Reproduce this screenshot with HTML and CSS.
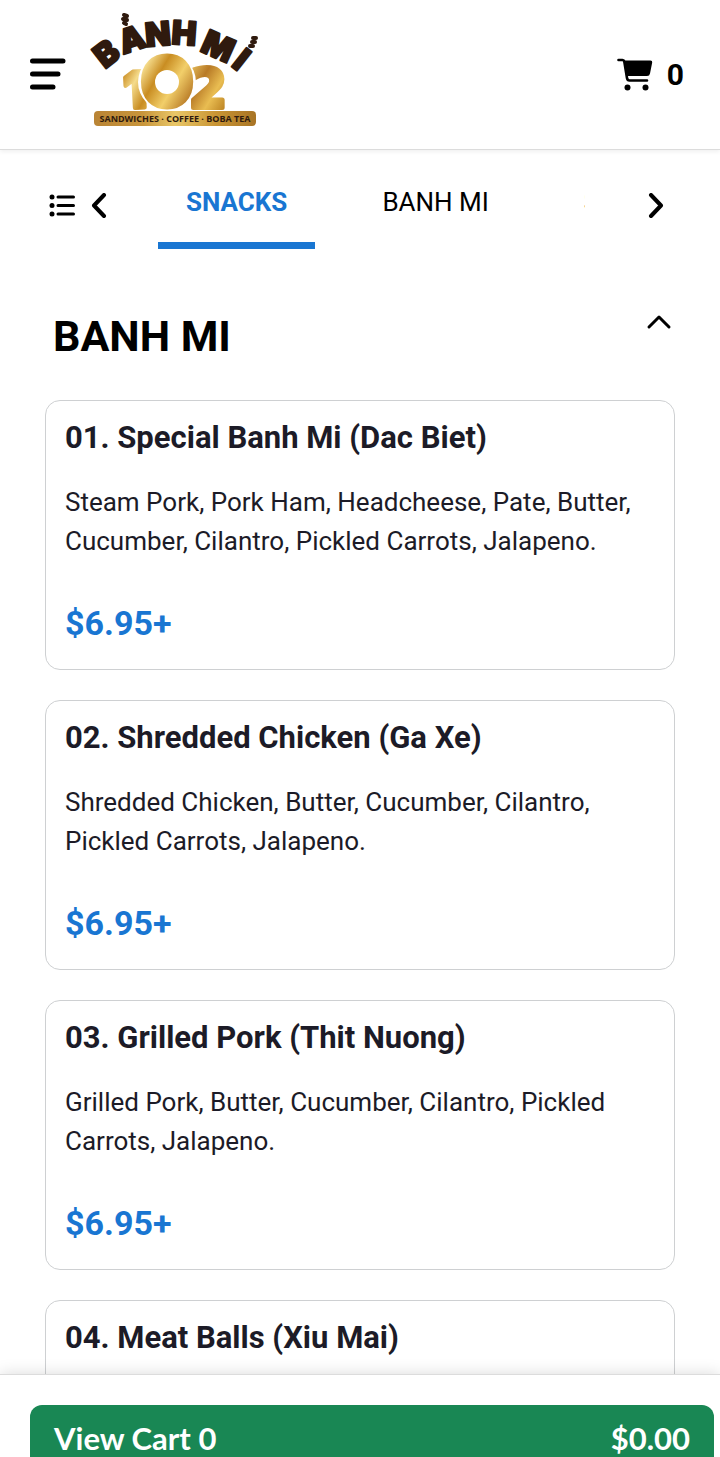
FILE: index.html
```html
<!DOCTYPE html>
<html lang="en">
<head>
  <meta charset="UTF-8" />
  <meta name="viewport" content="width=device-width, initial-scale=1.0" />
  <title>Banh Mi 102</title>
  <link rel="stylesheet" href="styles.css">
</head>
<body>
  <header class="header">
    <button class="icon-btn" type="button" aria-label="Menu">
      <svg width="36" height="32" viewBox="0 0 36 32" stroke="#000" stroke-width="5" stroke-linecap="round">
        <path d="M2.500 3H33M2.500 16H28M2.500 29H23" />
      </svg>
    </button>
    <a class="logo" href="#" aria-label="Banh Mi 102">
      <svg width="170" height="116" viewBox="0 0 170 116">
        <defs>
          <linearGradient id="gold" gradientUnits="userSpaceOnUse" x1="30" y1="48" x2="130" y2="108">
            <stop offset="0" stop-color="#b5781f" />
            <stop offset=".12" stop-color="#d19a35" />
            <stop offset=".22" stop-color="#f5dc8c" />
            <stop offset=".36" stop-color="#c98d22" />
            <stop offset=".52" stop-color="#f2cf6a" />
            <stop offset=".7" stop-color="#b87a26" />
            <stop offset=".85" stop-color="#e9bd52" />
            <stop offset="1" stop-color="#bd8423" />
          </linearGradient>
          <linearGradient id="band">
            <stop offset="0" stop-color="#b98435" />
            <stop offset=".3" stop-color="#c8953b" />
            <stop offset=".5" stop-color="#e9c768" />
            <stop offset=".75" stop-color="#c99534" />
            <stop offset="1" stop-color="#a87425" />
          </linearGradient>
        </defs>
        <g class="logo-name">
          <text transform="translate(18 43) rotate(-38)" y="11">B</text>
          <text transform="translate(43 29) rotate(-18)" y="11">A</text>
          <text transform="translate(69 24) rotate(-5)" y="11">N</text>
          <text transform="translate(95 23) rotate(4)" y="11">H</text>
          <text transform="translate(129 36) rotate(24)" y="11">M</text>
          <text transform="translate(152 49) rotate(38)" y="11">I</text>
        </g>
        <!-- little loaves used as accents -->
        <g stroke="#2f1a0e" stroke-width="4" stroke-linecap="round">
          <path d="M35 4l3 1M34 8l4 1M35 12l2 1" />
          <path d="M164 27h3M163 31h3M161 35h3" />
        </g>
        <g class="logo-number">
          <text x="46" y="97" transform="rotate(-3 43 80)">1</text>
          <text class="logo-two" x="119" y="96">2</text>
          <circle cx="78" cy="71" r="29" fill="#fff" />
          <text class="logo-ring" x="78" y="94">O</text>
          <circle cx="78" cy="71" r="12" fill="#fff" />
        </g>
        <rect x="5" y="100" width="162" height="15" rx="4" fill="url(#band)" />
        <text class="logo-tag" x="86" y="111">SANDWICHES · COFFEE · BOBA TEA</text>
      </svg>
    </a>
    <a class="cart" href="#" aria-label="Cart, 0 items">
      <svg width="36" height="33" viewBox="0 0 36 33">
        <path d="M1.500 2H5.500Q7 2 7.300 3.500L10 20Q10.400 22.500 12.500 22.500H30" fill="none" stroke="#000" stroke-width="2.600" stroke-linecap="round" />
        <path d="M6.500 2.500H33.500Q35.500 2.500 35.200 4.500L33 15.500Q32.600 18 30 18H9.300Z" />
        <circle cx="10.500" cy="29.500" r="3" />
        <circle cx="28.500" cy="29.500" r="3" />
      </svg>
      <span>0</span>
    </a>
  </header>

  <nav class="tabs">
    <button class="icon-btn" type="button" aria-label="All categories">
      <svg width="26" height="24" viewBox="0 0 26 24">
        <path d="M9 3H24.500M9 11.500H24.500M9 20H24.500" stroke="#000" stroke-width="3" stroke-linecap="round" />
        <circle cx="3" cy="3" r="2.500" />
        <circle cx="3" cy="11.500" r="2.500" />
        <circle cx="3" cy="20" r="2.500" />
      </svg>
    </button>
    <button class="icon-btn" type="button" aria-label="Previous">
      <svg class="chevron" width="16" height="26" viewBox="0 0 16 26">
        <path d="M13 2L3 12.500L13 23" />
      </svg>
    </button>
    <div class="tab-list">
      <a class="tab active" href="#snacks">SNACKS</a>
      <a class="tab" href="#banh-mi">BANH MI</a>
      <a class="tab" href="#s">S</a>
    </div>
    <button class="icon-btn" type="button" aria-label="Next">
      <svg class="chevron" width="16" height="26" viewBox="0 0 16 26">
        <path d="M3 2L13 12.500L3 23" />
      </svg>
    </button>
  </nav>

  <main class="menu" id="banh-mi">
    <div class="section-head">
      <h1>BANH MI</h1>
      <button class="icon-btn" type="button" aria-label="Collapse section">
        <svg class="chevron thin" width="26" height="16" viewBox="0 0 26 16">
          <path d="M3 13L13 3L23 13" />
        </svg>
      </button>
    </div>

    <article class="card">
      <h2>01. Special Banh Mi (Dac Biet)</h2>
      <p>Steam Pork, Pork Ham, Headcheese, Pate, Butter, Cucumber, Cilantro, Pickled Carrots, Jalapeno.</p>
      <div class="price">$6.95+</div>
    </article>
    <article class="card">
      <h2>02. Shredded Chicken (Ga Xe)</h2>
      <p>Shredded Chicken, Butter, Cucumber, Cilantro, Pickled Carrots, Jalapeno.</p>
      <div class="price">$6.95+</div>
    </article>
    <article class="card">
      <h2>03. Grilled Pork (Thit Nuong)</h2>
      <p>Grilled Pork, Butter, Cucumber, Cilantro, Pickled Carrots, Jalapeno.</p>
      <div class="price">$6.95+</div>
    </article>
    <article class="card last">
      <h2>04. Meat Balls (Xiu Mai)</h2>
    </article>
  </main>

  <footer class="cart-bar">
    <button class="view-cart" type="button">
      <span>View Cart 0</span>
      <span>$0.00</span>
    </button>
  </footer>
</body>
</html>
```
FILE: styles.css
```css
* {
  box-sizing: border-box;
}
body {
  margin: 0;
  height: 100vh;
  display: flex;
  flex-direction: column;
  overflow: hidden;
  background: #fff;
  color: #000;
  font-family: Roboto, sans-serif;
}
h1, h2, p {
  margin: 0;
}
svg {
  display: block;
}
a {
  color: inherit;
  text-decoration: none;
}
.icon-btn {
  flex: none;
  padding: 0;
  border: 0;
  background: none;
}

/* header */
.header {
  flex: none;
  display: flex;
  align-items: center;
  padding: 11px 36px 22px 30px;
  border-bottom: 1px solid #dcdcdc;
  box-shadow: 0 2px 4px rgba(0, 0, 0, 0.06);
}
.header .icon-btn {
  padding-top: 10px;
}
.logo {
  margin-left: 23px;
}
.logo svg {
  overflow: visible;
}
.logo-name {
  font: 900 33px Inter, sans-serif;
  fill: #2f1a0e;
  stroke: #2f1a0e;
  stroke-width: 2px;
  stroke-linejoin: round;
  text-anchor: middle;
}
.logo-number {
  font: 900 50px Inter, sans-serif;
  fill: url(#gold);
  stroke: url(#gold);
  stroke-width: 4px;
  stroke-linejoin: round;
  text-anchor: middle;
}
.logo-number circle {
  stroke: none;
}
.logo-two {
  font: bold 54px "DejaVu Sans", sans-serif;
  stroke-width: 5px;
}
.logo-ring {
  font-size: 64px;
  stroke-width: 7px;
}
.logo-tag {
  font: bold 9px "Open Sans", sans-serif;
  fill: #2f1a0e;
  text-anchor: middle;
}
.cart {
  display: flex;
  align-items: center;
  gap: 14px;
  margin-left: auto;
  padding-top: 10px;
  font-size: 30px;
  font-weight: bold;
}

/* category tabs */
.tabs {
  flex: none;
  display: flex;
  align-items: center;
  padding: 12px 56px 0 49px;
}
.tabs .icon-btn + .icon-btn {
  margin-left: 16px;
}
.tab-list {
  flex: 1;
  display: flex;
  gap: 39px;
  margin: 0 63px 0 51px;
  overflow: hidden;
}
.tab {
  flex: none;
  padding: 20px 28px;
  border-bottom: 7px solid transparent;
  font-size: 26px;
  line-height: 40px;
}
.tab.active {
  border-bottom-color: #1976d2;
  color: #1976d2;
  font-weight: bold;
}
.chevron {
  fill: none;
  stroke: #000;
  stroke-width: 4px;
  stroke-linecap: round;
  stroke-linejoin: round;
}
.chevron.thin {
  stroke-width: 3px;
}

/* menu section */
.menu {
  flex: 1;
  min-height: 0;
  padding: 63px 45px 0;
  overflow: hidden;
}
.section-head {
  display: flex;
  justify-content: space-between;
  align-items: flex-start;
  padding: 0 3px 40px 8px;
}
.section-head .icon-btn {
  padding-top: 2px;
}
.section-head h1 {
  font-size: 43px;
  line-height: 48px;
}
.card {
  margin-bottom: 30px;
  padding: 18px 19px 26px;
  border: 1px solid #ced0d2;
  border-radius: 15px;
  color: #1c1b27;
}
.card.last {
  height: 270px;
}
.card h2 {
  font-size: 31px;
  line-height: 38px;
}
.card p {
  margin-top: 26px;
  font-size: 26px;
  line-height: 39px;
}
.price {
  margin-top: 42px;
  color: #1976d2;
  font-size: 34px;
  font-weight: bold;
  line-height: 40px;
}

/* bottom bar */
.cart-bar {
  flex: none;
  position: relative;
  padding: 30px 6px 0 30px;
  border-top: 1px solid #dcdcdc;
  background: #fff;
  box-shadow: 0 0 15px rgba(0, 0, 0, 0.15);
}
.view-cart {
  display: flex;
  justify-content: space-between;
  width: 100%;
  padding: 14px 24px 0;
  border: 0;
  border-radius: 12px 12px 0 0;
  background: #198754;
  color: #fff;
  font: bold 31px/38px Lato, sans-serif;
}
```
